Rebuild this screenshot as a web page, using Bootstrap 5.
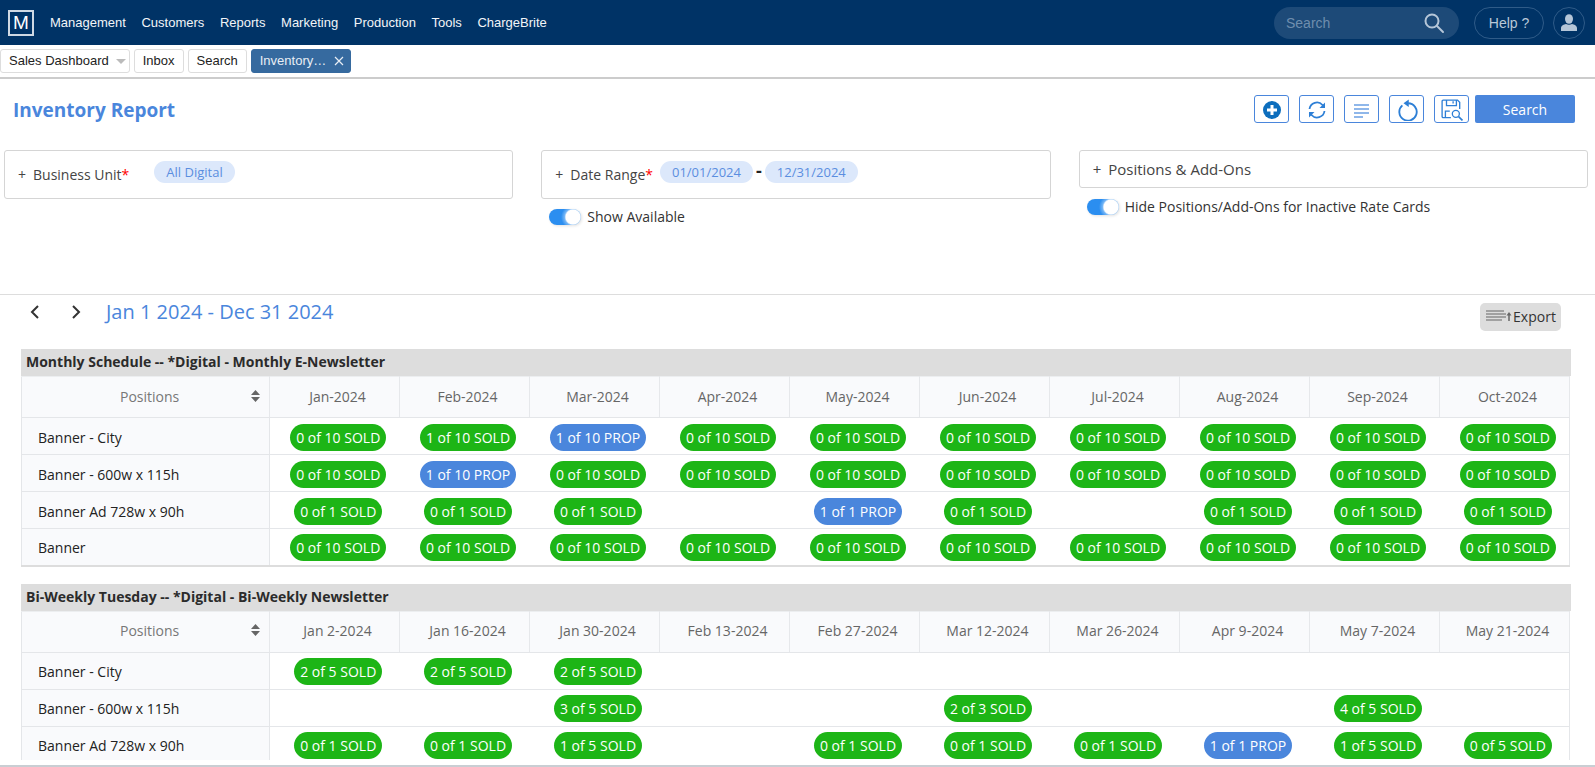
<!DOCTYPE html>
<html lang="en">
<head>
<meta charset="utf-8">
<title>Inventory Report</title>
<link href="https://cdn.jsdelivr.net/npm/bootstrap@5.3.0/dist/css/bootstrap.min.css" rel="stylesheet">
<style>
html,body{height:100%;overflow:hidden}
body{font-family:"Open Sans",sans-serif;font-size:14px;color:#333;background:#fff;display:flex;flex-direction:column;height:767px}
.top-bar{background:#003366;height:45px;padding:0 10px 0 8px;flex:none}
.brand-box{width:26px;height:26px;border:2px solid #cfd9e4;color:#fff;font:19px/22px "Liberation Sans",sans-serif;text-align:center;margin-right:16px;display:block}
.top-link{font:13px "Liberation Sans",sans-serif;color:#f2f5f8;text-decoration:none;margin-right:15.6px}
.search-pill{background:#1d4a78;border-radius:16px;width:185px;height:32px;padding:0 14px 0 12px;color:#6f8eae;font:14px "Liberation Sans",sans-serif;margin-right:15px}
.help-pill{border:1px solid #2f5b88;border-radius:16px;height:32px;width:70px;color:#b9c8d8;font:14px "Liberation Sans",sans-serif;margin-right:9px}
.user-pill{border:1px solid #2f5b88;border-radius:50%;width:32px;height:32px}
.tab-row{height:34px;padding:4px 0 0 0;border-bottom:2px solid #ccc;flex:none;gap:4px}
.tab-btn{font:13px/22px "Liberation Sans",sans-serif;color:#222;background:#fff;border:1px solid #ddd;border-radius:3px;height:24px;padding:0 8px;white-space:nowrap}
.tab-first{padding-right:3px}
.tab-on{background:#366a9f;border-color:#366a9f;color:#e8eef5;width:100px;padding:0 6px 0 8px}
.tab-caret{width:0;height:0;border-left:5px solid transparent;border-right:5px solid transparent;border-top:5px solid #bbb;margin-left:7px}
.page-title{font-size:19px;font-weight:700;color:#4a86dc;margin:4px 0 0}
.head-row{padding:16px 20px 0 13px;flex:none;height:71px}
.icon-btn{width:35px;height:28px;border:1px solid #4a86dc;border-radius:3px;background:#fff;padding:0;margin-right:10px}
.icon-btn:nth-of-type(5){margin-right:6px}
.search-main{width:100px;height:28px;background:#4a86dc;color:#fff;border:0;border-radius:2px;font-size:14px}
.filter-row{height:145px;padding:0 7px 0 4px;border-bottom:1px solid #ddd;flex:none;gap:28px}
.filter-col{flex:1 1 0;min-width:0}
.filter-box{border:1px solid #d5d5d5;border-radius:3px;height:49px;padding:10px 13px;color:#444;font-size:14px}
.filter-label{margin-top:3px}
.filter-short{height:38px;padding:7px 13px;font-size:15px}
.chip{background:#dce8fb;color:#5b8ee0;border-radius:12px;height:22px;line-height:22px;padding:0 12px;font-size:13px;white-space:nowrap}
.chip-first{margin-left:25px}
.chip-date{margin-left:7px}
.dash{font-size:18px;font-weight:700;line-height:18px;color:#222;padding:0 3px}
.req{color:#f00}
.pm{margin-right:7px}
.switch-row{padding:7px 0 0 8px;color:#333;font-size:14px;gap:6px}
.filter-short + .switch-row{padding-top:8px}
.switch-row .form-check-input{width:32px;height:16px;margin:0;background-color:#2b8ef0;border:0;float:none;background-image:radial-gradient(circle at 24px 50%,#fff 7px,rgba(255,255,255,.35) 8.5px,transparent 12px);box-shadow:1px 1px 3px rgba(0,0,0,.12)}
.switch-row .form-check{padding:0;margin:0;min-height:0;display:flex}
.range-row{height:44px;padding:0 34px 0 24px;flex:none}
.range-left{padding-top:2px}
.range-text{font-size:20px;color:#4a86dc}
.chev{width:22px;margin-right:19px;display:block}
.export-btn{background:#ddd;border-radius:5px;height:28px;width:81px;color:#333;font-size:14px;border:0;padding:0 0 2px;margin-top:8px}
.sched-area{flex:1 1 auto;min-height:0;overflow:hidden;padding:0 24px 0 21px;margin-top:10px}
.sched-head{background:#ddd;font-weight:700;font-size:14px;color:#2b2b2b;height:27px;line-height:26px;padding-left:5px}
.sched{table-layout:fixed;width:1548px;margin:0 0 17px;border-collapse:collapse;color:#222}
.col-pos{width:248px}
.col-per{width:130px}
.sched th,.sched td{padding:2px 0 0 7px;height:37px;vertical-align:middle;text-align:center;font-weight:400;font-size:14px;border:0;border-bottom:1px solid #e4e6e9;background:#fff;box-shadow:none}
.sched td:last-child{border-right:1px solid #e4e6e9}
.sched tbody tr:last-child td{border-bottom:2px solid #ddd}
.sched th.hd{height:41px;color:#666;background:#f9fafc;border-top:1px solid #eceef0;border-right:1px solid #e6e8eb;padding:0 0 2px 6px}
.sched th.hd-first{color:#777;border-left:1px solid #e4e6e9;text-align:left;padding-left:98px}
.sched td.rowname{text-align:left;padding-left:16px;background:#f9fafc;border-left:1px solid #e4e6e9;border-right:1px solid #e4e6e9}
.sort-ic{margin-left:72px;vertical-align:0}
.tag{display:inline-block;border-radius:14px;color:#fff;line-height:27px;height:27px;padding:0 6px;font-size:14px;white-space:nowrap}
.tag-s{background:#1db516}
.tag-p{background:#4a86dc}
.foot-line{height:2px;background:#c9ced3;flex:none;margin-top:5px}
</style>
</head>
<body>
<nav class="top-bar d-flex align-items-center">
  <span class="brand-box">M</span>
  <a class="top-link" href="#">Management</a><a class="top-link" href="#">Customers</a><a class="top-link" href="#">Reports</a><a class="top-link" href="#">Marketing</a><a class="top-link" href="#">Production</a><a class="top-link" href="#">Tools</a><a class="top-link" href="#">ChargeBrite</a>
  <div class="search-pill d-flex align-items-center justify-content-between ms-auto"><span>Search</span>
    <svg width="22" height="22" viewBox="0 0 22 22" fill="none" stroke="#b5c6d8" stroke-width="2"><circle cx="9" cy="9" r="6.5"/><path d="M14 14l6 6" stroke-linecap="round"/></svg></div>
  <div class="help-pill d-flex align-items-center justify-content-center">Help ?</div>
  <div class="user-pill d-flex align-items-center justify-content-center">
    <svg width="16" height="18" viewBox="0 0 16 18" fill="#b5c6d8"><ellipse cx="8" cy="5" rx="4" ry="4.8"/><path d="M0 17v-3c0-2.500 3-3.500 5-4 1.500 1 4.500 1 6 0 2 .5 5 1.500 5 4v3z"/></svg></div>
</nav>
<div class="tab-row d-flex">
  <div class="tab-btn tab-first d-flex align-items-center">Sales Dashboard<span class="tab-caret"></span></div>
  <div class="tab-btn">Inbox</div>
  <div class="tab-btn">Search</div>
  <div class="tab-btn tab-on d-flex align-items-center justify-content-between"><span>Inventory…</span>
    <svg width="10" height="10" viewBox="0 0 10 10" stroke="#e8eef5" stroke-width="1.200"><path d="M1 1l8 8M9 1l-8 8"/></svg></div>
</div>
<div class="head-row d-flex justify-content-between align-items-start">
  <h1 class="page-title">Inventory Report</h1>
  <div class="d-flex">
    <button class="icon-btn" aria-label="Add"><svg width="20" height="20" viewBox="0 0 20 20"><circle cx="10" cy="10" r="9" fill="#0d6ebd"/><path d="M10 5v10M5 10h10" stroke="#fff" stroke-width="3"/></svg></button>
    <button class="icon-btn" aria-label="Refresh"><svg width="20" height="20" viewBox="0 0 20 20" fill="none" stroke="#2d7fd6" stroke-width="1.800"><path d="M2.500 9a7.500 7.500 0 0 1 13-4l2 2"/><path d="M17.500 11a7.500 7.500 0 0 1-13 4l-2-2"/><path d="M18 2.500V8h-5.500" fill="#2d7fd6" stroke="none"/><path d="M2 17.500V12h5.500" fill="#2d7fd6" stroke="none"/></svg></button>
    <button class="icon-btn" aria-label="List"><svg width="15" height="14" viewBox="0 0 15 14" stroke="#6ba0e4" stroke-width="1.700"><path d="M0 1h15M0 5h15M0 9h15M0 13h9"/></svg></button>
    <button class="icon-btn" aria-label="Reset"><svg width="22" height="22" viewBox="1 0 18 19" fill="none" stroke="#2d7fd6" stroke-width="1.600"><path d="M6 5.500A7.500 7.500 0 1 0 11 3.700"/><path d="M11.500.5v6.500L7 3.700z" fill="#2d7fd6" stroke="none"/></svg></button>
    <button class="icon-btn" aria-label="Saved searches"><svg width="22" height="22" viewBox="1 1 20 20" fill="none" stroke="#2d7fd6" stroke-width="1.200"><path d="M10 18H3a1 1 0 0 1-1-1V3a1 1 0 0 1 1-1h13l2 2v6"/><path d="M6 2v5h9V2M12 3v2"/><path d="M5 18v-6h4"/><circle cx="14.500" cy="14.500" r="3.200"/><path d="M17 17l3.500 3.500" stroke-width="1.500"/></svg></button>
    <button class="search-main">Search</button>
  </div>
</div>
<div class="filter-row d-flex">
  <div class="filter-col">
    <div class="filter-box d-flex"><span class="filter-label"><span class="pm">+</span>Business Unit<span class="req">*</span></span><span class="chip chip-first">All Digital</span></div>
  </div>
  <div class="filter-col">
    <div class="filter-box d-flex"><span class="filter-label"><span class="pm">+</span>Date Range<span class="req">*</span></span><span class="chip chip-date">01/01/2024</span><span class="dash">-</span><span class="chip">12/31/2024</span></div>
    <div class="switch-row d-flex align-items-center"><div class="form-check form-switch"><input class="form-check-input" type="checkbox" role="switch" checked aria-label="Show Available"></div><span>Show Available</span></div>
  </div>
  <div class="filter-col">
    <div class="filter-box filter-short"><span class="pm">+</span>Positions &amp; Add-Ons</div>
    <div class="switch-row d-flex align-items-center"><div class="form-check form-switch"><input class="form-check-input" type="checkbox" role="switch" checked aria-label="Hide"></div><span>Hide Positions/Add-Ons for Inactive Rate Cards</span></div>
  </div>
</div>
<div class="range-row d-flex align-items-start justify-content-between">
  <div class="range-left d-flex align-items-center">
    <svg class="chev" width="22" height="22" viewBox="0 0 22 22" fill="none" stroke="#333" stroke-width="2"><path d="M14 5l-6 6 6 6"/></svg>
    <svg class="chev" width="22" height="22" viewBox="0 0 22 22" fill="none" stroke="#333" stroke-width="2"><path d="M8 5l6 6-6 6"/></svg>
    <span class="range-text">Jan 1 2024 - Dec 31 2024</span>
  </div>
  <button class="export-btn d-flex align-items-center justify-content-center"><svg width="28" height="14" viewBox="0 0 28 14" stroke="#666" stroke-width="1.200"><path d="M1 2h18M1 5h20M1 8h20M1 11h16"/><path d="M24 12V6" stroke-width="1.500"/><path d="M21.500 6.500L24 3l2.500 3.500z" fill="#666" stroke="none"/></svg>Export</button>
</div>
<div class="sched-area">
  <div class="sched-head">Monthly Schedule -- *Digital - Monthly E-Newsletter</div>
  <table class="table sched">
    <colgroup><col class="col-pos"><col span="10" class="col-per"></colgroup>
    <thead><tr><th class="hd hd-first">Positions<svg class="sort-ic" width="9" height="12" viewBox="0 0 9 12" fill="#666"><path d="M4.500 0L9 5H0zM4.500 12L0 7h9z"/></svg></th><th class="hd">Jan-2024</th><th class="hd">Feb-2024</th><th class="hd">Mar-2024</th><th class="hd">Apr-2024</th><th class="hd">May-2024</th><th class="hd">Jun-2024</th><th class="hd">Jul-2024</th><th class="hd">Aug-2024</th><th class="hd">Sep-2024</th><th class="hd">Oct-2024</th></tr></thead>
    <tbody>
    <tr><td class="rowname">Banner - City</td><td><span class="tag tag-s">0 of 10 SOLD</span></td><td><span class="tag tag-s">1 of 10 SOLD</span></td><td><span class="tag tag-p">1 of 10 PROP</span></td><td><span class="tag tag-s">0 of 10 SOLD</span></td><td><span class="tag tag-s">0 of 10 SOLD</span></td><td><span class="tag tag-s">0 of 10 SOLD</span></td><td><span class="tag tag-s">0 of 10 SOLD</span></td><td><span class="tag tag-s">0 of 10 SOLD</span></td><td><span class="tag tag-s">0 of 10 SOLD</span></td><td><span class="tag tag-s">0 of 10 SOLD</span></td></tr>
    <tr><td class="rowname">Banner - 600w x 115h</td><td><span class="tag tag-s">0 of 10 SOLD</span></td><td><span class="tag tag-p">1 of 10 PROP</span></td><td><span class="tag tag-s">0 of 10 SOLD</span></td><td><span class="tag tag-s">0 of 10 SOLD</span></td><td><span class="tag tag-s">0 of 10 SOLD</span></td><td><span class="tag tag-s">0 of 10 SOLD</span></td><td><span class="tag tag-s">0 of 10 SOLD</span></td><td><span class="tag tag-s">0 of 10 SOLD</span></td><td><span class="tag tag-s">0 of 10 SOLD</span></td><td><span class="tag tag-s">0 of 10 SOLD</span></td></tr>
    <tr><td class="rowname">Banner Ad 728w x 90h</td><td><span class="tag tag-s">0 of 1 SOLD</span></td><td><span class="tag tag-s">0 of 1 SOLD</span></td><td><span class="tag tag-s">0 of 1 SOLD</span></td><td></td><td><span class="tag tag-p">1 of 1 PROP</span></td><td><span class="tag tag-s">0 of 1 SOLD</span></td><td></td><td><span class="tag tag-s">0 of 1 SOLD</span></td><td><span class="tag tag-s">0 of 1 SOLD</span></td><td><span class="tag tag-s">0 of 1 SOLD</span></td></tr>
    <tr><td class="rowname">Banner</td><td><span class="tag tag-s">0 of 10 SOLD</span></td><td><span class="tag tag-s">0 of 10 SOLD</span></td><td><span class="tag tag-s">0 of 10 SOLD</span></td><td><span class="tag tag-s">0 of 10 SOLD</span></td><td><span class="tag tag-s">0 of 10 SOLD</span></td><td><span class="tag tag-s">0 of 10 SOLD</span></td><td><span class="tag tag-s">0 of 10 SOLD</span></td><td><span class="tag tag-s">0 of 10 SOLD</span></td><td><span class="tag tag-s">0 of 10 SOLD</span></td><td><span class="tag tag-s">0 of 10 SOLD</span></td></tr>
    </tbody>
  </table>
  <div class="sched-head">Bi-Weekly Tuesday -- *Digital - Bi-Weekly Newsletter</div>
  <table class="table sched">
    <colgroup><col class="col-pos"><col span="10" class="col-per"></colgroup>
    <thead><tr><th class="hd hd-first">Positions<svg class="sort-ic" width="9" height="12" viewBox="0 0 9 12" fill="#666"><path d="M4.500 0L9 5H0zM4.500 12L0 7h9z"/></svg></th><th class="hd">Jan 2-2024</th><th class="hd">Jan 16-2024</th><th class="hd">Jan 30-2024</th><th class="hd">Feb 13-2024</th><th class="hd">Feb 27-2024</th><th class="hd">Mar 12-2024</th><th class="hd">Mar 26-2024</th><th class="hd">Apr 9-2024</th><th class="hd">May 7-2024</th><th class="hd">May 21-2024</th></tr></thead>
    <tbody>
    <tr><td class="rowname">Banner - City</td><td><span class="tag tag-s">2 of 5 SOLD</span></td><td><span class="tag tag-s">2 of 5 SOLD</span></td><td><span class="tag tag-s">2 of 5 SOLD</span></td><td></td><td></td><td></td><td></td><td></td><td></td><td></td></tr>
    <tr><td class="rowname">Banner - 600w x 115h</td><td></td><td></td><td><span class="tag tag-s">3 of 5 SOLD</span></td><td></td><td></td><td><span class="tag tag-s">2 of 3 SOLD</span></td><td></td><td></td><td><span class="tag tag-s">4 of 5 SOLD</span></td><td></td></tr>
    <tr><td class="rowname">Banner Ad 728w x 90h</td><td><span class="tag tag-s">0 of 1 SOLD</span></td><td><span class="tag tag-s">0 of 1 SOLD</span></td><td><span class="tag tag-s">1 of 5 SOLD</span></td><td></td><td><span class="tag tag-s">0 of 1 SOLD</span></td><td><span class="tag tag-s">0 of 1 SOLD</span></td><td><span class="tag tag-s">0 of 1 SOLD</span></td><td><span class="tag tag-p">1 of 1 PROP</span></td><td><span class="tag tag-s">1 of 5 SOLD</span></td><td><span class="tag tag-s">0 of 5 SOLD</span></td></tr>
    </tbody>
  </table>
</div>
<div class="foot-line"></div>
<script src="https://cdn.jsdelivr.net/npm/bootstrap@5.3.0/dist/js/bootstrap.bundle.min.js"></script>
</body>
</html>
